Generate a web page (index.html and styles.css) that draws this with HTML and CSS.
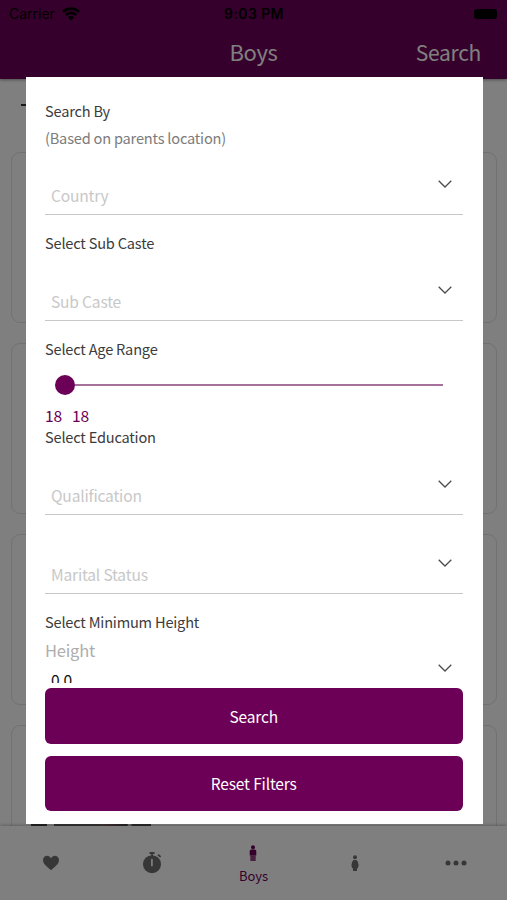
FILE: index.html
```html
<!DOCTYPE html>
<html lang="en">
<head>
<meta charset="utf-8">
<title>Boys</title>
<link rel="stylesheet" href="styles.css">
</head>
<body>
<svg width="0" height="0" class="defs"><symbol id="chev" viewBox="0 0 14 8"><path d="M.7.8 7 7 13.3.8" fill="none" stroke="#4c4c4c" stroke-width="1.3"/></symbol></svg>
<div class="screen">
  <header class="header">
    <div class="status">
      <div class="carrier"><span>Carrier</span>
        <svg width="18" height="14" viewBox="0 0 18 14" fill="none" stroke="#000" stroke-width="2.7"><path d="M.9 4.900a11.500 11.500 0 0 1 16.200 0M3.800 8a7.400 7.400 0 0 1 10.400 0"/><path d="M9 13.600 5.900 10.400a4.400 4.400 0 0 1 6.200 0z" fill="#000" stroke="none"/></svg>
      </div>
      <div class="time">9:03 PM</div>
      <div class="battery"><i></i></div>
    </div>
    <div class="nav"><span></span><span class="title">Boys</span><span class="action">Search</span></div>
  </header>
  <main class="list">
    <div class="count"></div>
    <div class="card"></div>
    <div class="card"></div>
    <div class="card"></div>
    <div class="card"><div class="photo"></div></div>
  </main>
  <nav class="tabs">
    <div class="tab"><svg width="18" height="18" viewBox="0 0 18 18"><path d="M9 16.300C4.500 12.600 1 9.800 1 6.100 1 3.600 2.900 1.800 5.100 1.800c1.600 0 3.100.9 3.900 2.400.8-1.500 2.300-2.400 3.900-2.400C15.100 1.800 17 3.600 17 6.100c0 3.700-3.500 6.500-8 10.200z" fill="#6f6f6f"/></svg></div>
    <div class="tab"><svg width="20" height="22" viewBox="0 0 20 22"><circle cx="10" cy="12.200" r="9" fill="#6f6f6f"/><path d="M7.500 1h5M10 1v3M16 2.800l2.700 2.100" stroke="#6f6f6f" stroke-width="1.800"/><path d="M9.900 7.500v6" stroke="#fff" stroke-width="1.700" stroke-linecap="round"/></svg></div>
    <div class="tab on"><svg width="10" height="17" viewBox="0 0 10 17" fill="#6b0056"><circle cx="5" cy="2.300" r="2"/><path d="M3.300 4.500h3.400Q8.300 4.500 8.300 6v4.500H1.700V6q0-1.500 1.600-1.500z"/><path d="M2.300 10.500h5.400V16H2.300z" opacity=".75"/></svg><span>Boys</span></div>
    <div class="tab"><svg width="10" height="17" viewBox="0 0 10 17" fill="#6f6f6f"><circle cx="5" cy="2.300" r="2"/><path d="M3.500 5h3l1.400 2L8.600 10.500 7.800 13 7 13.500V16H3v-2.500L2.200 13 1.400 10.500 2.100 7z"/></svg></div>
    <div class="tab"><svg width="22" height="6" viewBox="0 0 22 6" fill="#6f6f6f"><circle cx="3" cy="3" r="2.500"/><circle cx="11" cy="3" r="2.500"/><circle cx="19" cy="3" r="2.500"/></svg></div>
  </nav>
  <div class="overlay">
    <section class="modal">
      <div class="form">
        <div class="label first">Search By</div>
        <div class="hint">(Based on parents location)</div>
        <div class="field"><span>Country</span><svg class="chev"><use href="#chev"/></svg></div>
        <div class="label">Select Sub Caste</div>
        <div class="field"><span>Sub Caste</span><svg class="chev"><use href="#chev"/></svg></div>
        <div class="label">Select Age Range</div>
        <div class="slider"><div class="thumb"></div><div class="track"></div></div>
        <div class="range"><span>18</span><span>18</span></div>
        <div class="label tight">Select Education</div>
        <div class="field"><span>Qualification</span><svg class="chev"><use href="#chev"/></svg></div>
        <div class="field tall"><span>Marital Status</span><svg class="chev"><use href="#chev"/></svg></div>
        <div class="label">Select Minimum Height</div>
        <div class="caption">Height</div>
        <div class="field value"><span>0.0</span><svg class="chev"><use href="#chev"/></svg></div>
      </div>
      <div class="buttons"><button>Search</button><button>Reset Filters</button></div>
    </section>
  </div>
</div>
</body>
</html>
```
FILE: styles.css
```css
* { box-sizing: border-box; }
body { margin: 0; font-family: "Noto Sans CJK SC", "Noto Sans", sans-serif; }
.defs { position: absolute; }
.screen { position: relative; width: 507px; height: 900px; overflow: hidden; display: flex; flex-direction: column; background: #fff; }
.header { height: 79px; flex: none; background: #6b0056; box-shadow: 0 1px 3px rgba(0,0,0,.4); z-index: 1; }
.status { height: 28px; padding: 0 10px 0 9px; display: grid; grid-template-columns: 1fr auto 1fr; align-items: center; font: 14px/28px Inter, sans-serif; color: #000; }
.carrier { display: flex; align-items: center; gap: 7px; }
.time { font-weight: 600; letter-spacing: .4px; padding-left: 2px; }
.battery { display: flex; justify-content: flex-end; }
.battery i { width: 23px; height: 10px; border-radius: 3px; background: #000; }
.nav { height: 48px; padding-right: 26px; display: grid; grid-template-columns: 1fr auto 1fr; align-items: center; color: #fff; font-size: 22px; line-height: 46px; letter-spacing: -.4px; }
.nav > :first-child { margin-right: -26px; }
.title { margin-left: 26px; padding-bottom: 3px; }
.action { text-align: right; font-size: 21px; letter-spacing: -.3px; padding-bottom: 1px; }
.list { flex: 1; min-height: 0; overflow: hidden; padding: 0 10px 0 11px; display: flex; flex-direction: column; gap: 20px; }
.count { height: 54px; flex: none; padding: 25px 0 0 10px; }
.count::before { content: ""; display: block; width: 12px; height: 2px; background: #333; }
.card { height: 171px; flex: none; border: 1px solid #e2e2e2; border-radius: 9px; }
.card:nth-child(2) { margin-top: -1px; }
.photo { width: 120px; height: 20px; margin: 97px 0 0 19px; background: linear-gradient(90deg, #444 16px, #fff 16px, #fff 23px, #666 23px, #666 68px, #846464 72px, #444 96px, #fff 98px, #555 102px); }
.tabs { height: 74px; flex: none; background: #fff; box-shadow: 0 -1px 3px rgba(0,0,0,.25); display: grid; grid-template-columns: repeat(5, 1fr); z-index: 1; }
.tab { display: flex; flex-direction: column; align-items: center; justify-content: center; }
.on { color: #6b0056; font-size: 13px; line-height: 20px; gap: 4px; padding-top: 4px; }
.overlay { position: absolute; inset: 0; z-index: 2; background: rgba(0,0,0,.5); padding: 77px 24.500px 76px 25.500px; }
.modal { height: 747px; background: #fff; padding: 0 20px 0 19.500px; display: flex; flex-direction: column; letter-spacing: -.2px; }
.form { height: 606px; flex: none; overflow: hidden; }
.label, .hint { font-size: 14.600px; line-height: 22px; color: #3c3c3c; margin-top: 17px; }
.label.first { margin-top: 23px; }
.label.tight { margin-top: 0; }
.hint { margin-top: 5px; color: #7c7c7c; }
.field { height: 66px; border-bottom: 1px solid #c8c8c8; display: flex; align-items: flex-end; justify-content: space-between; padding: 0 11px 7px 6px; font-size: 15.600px; line-height: 24px; color: #c8c8c8; }
.label + .field { height: 67px; }
.field.tall { height: 79px; }
.chev { width: 14px; height: 8px; margin-bottom: 19px; }
.slider { height: 44px; padding: 5px 20px 0 9.500px; display: flex; align-items: center; }
.thumb { width: 20px; height: 20px; border-radius: 50%; background: #6b0056; }
.track { flex: 1; height: 2px; background: #a5709a; }
.range { display: flex; gap: 10px; font-size: 15.600px; line-height: 22px; color: #6b0056; }
.caption { font-size: 16.500px; line-height: 22px; margin-top: 6px; color: #adadad; }
.field.value { height: 38px; color: #111; }
.buttons { display: flex; flex-direction: column; gap: 12px; padding-top: 5px; }
button { height: 55.500px; border: 0; border-radius: 6px; background: #6b0056; color: #fff; font: 15.500px/24px "Noto Sans CJK SC", sans-serif; letter-spacing: -.15px; padding: 0; }
```
